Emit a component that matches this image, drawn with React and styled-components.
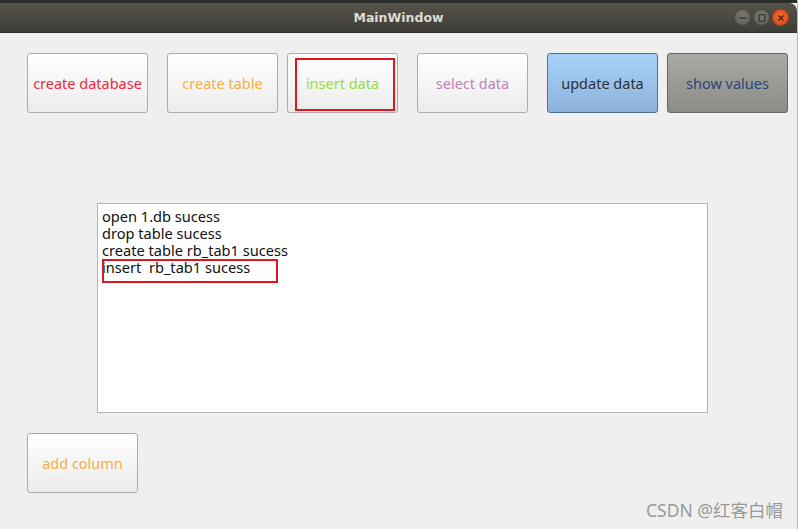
import React from "react";
import styled, { createGlobalStyle } from "styled-components";

const GlobalStyle = createGlobalStyle`
  html, body {
    margin: 0;
    padding: 0;
    background: #efefef;
  }
  body {
    font-family: "Noto Sans", "DejaVu Sans", sans-serif;
  }
`;

const Window = styled.div`
  position: relative;
  width: 798px;
  height: 529px;
  background: #efefef;
  display: flex;
  flex-direction: column;
  overflow: hidden;
  box-sizing: border-box;
  border-right: 1px solid #b9b9b9;
`;

const TopStrip = styled.div`
  height: 3px;
  background: #2c2c2a;
`;

const TitleBar = styled.div`
  height: 30px;
  background: linear-gradient(#56534b, #3f3d38);
  border-top-right-radius: 8px;
  display: flex;
  align-items: center;
  justify-content: center;
  position: relative;
  box-sizing: border-box;
  border-bottom: 1px solid #33322e;
`;

const Title = styled.span`
  color: #dfdbd2;
  font-family: "DejaVu Sans", sans-serif;
  font-size: 12.5px;
  font-weight: bold;
  margin-top: -1px;
`;

const Controls = styled.div`
  position: absolute;
  right: 8px;
  top: 6px;
  display: flex;
  gap: 2px;
`;

const Ctrl = styled.div`
  width: 17px;
  height: 17px;
  border-radius: 50%;
  box-sizing: border-box;
  border: 1px solid ${(p) => (p.close ? "#a8421c" : "#4a4843")};
  background: ${(p) =>
    p.close
      ? "radial-gradient(circle at 50% 35%, #f0682e, #d8491a)"
      : "radial-gradient(circle at 50% 35%, #7a7770, #5e5c56)"};
  display: flex;
  align-items: center;
  justify-content: center;
`;

const Body = styled.div`
  flex: 1;
  display: flex;
  flex-direction: column;
  padding: 20px 0 0 27px;
`;

const ButtonRow = styled.div`
  display: flex;
`;

const Button = styled.div`
  position: relative;
  width: ${(p) => p.w}px;
  height: 60px;
  margin-left: ${(p) => p.ml || 0}px;
  box-sizing: border-box;
  border: 1px solid ${(p) => p.border || "#acacac"};
  border-radius: 3px;
  background: ${(p) => p.bg || "linear-gradient(#ffffff, #ececec)"};
  color: ${(p) => p.color};
  font-family: "Noto Sans", "DejaVu Sans", sans-serif;
  font-size: 14.5px;
  display: flex;
  align-items: center;
  justify-content: center;
`;

const Highlight = styled.div`
  position: absolute;
  box-sizing: border-box;
  border: 2px solid #e2141e;
  pointer-events: none;
`;

const LogBox = styled.div`
  position: relative;
  margin: 90px 0 0 70px;
  width: 611px;
  height: 210px;
  box-sizing: border-box;
  background: #ffffff;
  border: 1px solid #b4b4b4;
  padding: 4px 4px;
  font-family: "Noto Sans", "DejaVu Sans", sans-serif;
  font-size: 14.6px;
  line-height: 17px;
  color: #111111;
`;

const Line = styled.div`
  white-space: pre;
`;

const BottomRow = styled.div`
  margin-top: 20px;
  display: flex;
`;

const Watermark = styled.div`
  position: absolute;
  right: 14px;
  bottom: 7px;
  color: #9a9a9a;
  font-family: "Noto Sans", "Noto Sans CJK SC", sans-serif;
  font-size: 17.5px;
`;

const buttons = [
  { label: "create database", w: 121, ml: 0, color: "#ee2a3c" },
  { label: "create table", w: 111, ml: 19, color: "#f7ad45" },
  { label: "insert data", w: 111, ml: 9, color: "#95dd3c", mark: true },
  { label: "select data", w: 111, ml: 19, color: "#be82b8" },
  {
    label: "update data",
    w: 111,
    ml: 19,
    color: "#2e3032",
    bg: "linear-gradient(#a9d2fa, #8cb3dc)",
    border: "#4f6e93",
  },
  {
    label: "show values",
    w: 121,
    ml: 9,
    color: "#2b4378",
    bg: "linear-gradient(#aaaaa5, #8d8d88)",
    border: "#676763",
  },
];

const lines = [
  "open 1.db sucess",
  "drop table sucess",
  "create table rb_tab1 sucess",
  "insert  rb_tab1 sucess",
];

export default function App() {
  return (
    <Window>
      <GlobalStyle />
      <TopStrip />
      <TitleBar>
        <Title>MainWindow</Title>
        <Controls>
          <Ctrl>
            <svg width="8" height="8" viewBox="0 0 8 8">
              <line x1="0.5" y1="4" x2="7.5" y2="4" stroke="#3a3935" strokeWidth="1.4" />
            </svg>
          </Ctrl>
          <Ctrl>
            <svg width="8" height="8" viewBox="0 0 8 8">
              <rect x="1.2" y="0.7" width="5.6" height="6.6" fill="none" stroke="#3a3935" strokeWidth="1.2" />
            </svg>
          </Ctrl>
          <Ctrl close>
            <svg width="8" height="8" viewBox="0 0 8 8">
              <path d="M1.5 1.5 L6.5 6.5 M6.5 1.5 L1.5 6.5" stroke="#4a1a08" strokeWidth="1.2" />
            </svg>
          </Ctrl>
        </Controls>
      </TitleBar>
      <Body>
        <ButtonRow>
          {buttons.map((b) => (
            <Button key={b.label} w={b.w} ml={b.ml} color={b.color} bg={b.bg} border={b.border}>
              {b.label}
              {b.mark && (
                <Highlight style={{ left: 7, top: 4, width: 100, height: 53 }} />
              )}
            </Button>
          ))}
        </ButtonRow>
        <LogBox>
          {lines.map((l) => (
            <Line key={l}>{l}</Line>
          ))}
          <Highlight style={{ left: 4, top: 55, width: 176, height: 24 }} />
        </LogBox>
        <BottomRow>
          <Button w={111} color="#f7ad45">add column</Button>
        </BottomRow>
      </Body>
      <Watermark>CSDN @红客白帽</Watermark>
    </Window>
  );
}
